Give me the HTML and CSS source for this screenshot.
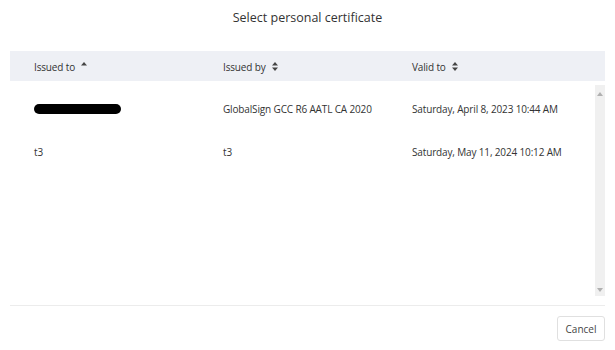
FILE: index.html
```html
<!DOCTYPE html>
<html>
<head>
<meta charset="utf-8">
<link rel="stylesheet" href="styles.css">
</head>
<body>
<div class="dialog">
  <h1 class="title">Select personal certificate</h1>
  <div class="table">
    <div class="thead">
      <div class="th">Issued to <span class="sort"><svg width="6" height="9" viewBox="0 0 6 9"><path d="M3 0L6 3.5H0Z" fill="#444"/></svg></span></div>
      <div class="th">Issued by <span class="sort"><svg width="6" height="9" viewBox="0 0 6 9"><path d="M3 0L6 3.5H0Z M3 9L6 5.5H0Z" fill="#444"/></svg></span></div>
      <div class="th">Valid to <span class="sort"><svg width="6" height="9" viewBox="0 0 6 9"><path d="M3 0L6 3.5H0Z M3 9L6 5.5H0Z" fill="#444"/></svg></span></div>
    </div>
    <div class="tbody">
      <div class="rows">
        <div class="row">
          <div class="td"><span class="redact"></span></div>
          <div class="td">GlobalSign GCC R6 AATL CA 2020</div>
          <div class="td">Saturday, April 8, 2023 10:44 AM</div>
        </div>
        <div class="row">
          <div class="td">t3</div>
          <div class="td">t3</div>
          <div class="td">Saturday, May 11, 2024 10:12 AM</div>
        </div>
      </div>
      <div class="scrollbar">
        <svg class="arrow" width="6" height="4" viewBox="0 0 6 4"><path d="M3 0L6 4H0Z" fill="#b0b0b0"/></svg>
        <svg class="arrow" width="6" height="4" viewBox="0 0 6 4"><path d="M0 0H6L3 4Z" fill="#b0b0b0"/></svg>
      </div>
    </div>
  </div>
  <div class="footer">
    <button class="btn">Cancel</button>
  </div>
</div>
</body>
</html>
```
FILE: styles.css
```css
* { box-sizing: border-box; }
html, body { margin: 0; padding: 0; background: #fff; }
body {
  font-family: "Open Sans", "Noto Sans", sans-serif;
  color: #333;
  width: 615px;
  height: 350px;
  overflow: hidden;
}
.dialog {
  padding: 0 10px;
  display: flex;
  flex-direction: column;
}
.title {
  margin: 0;
  height: 51px;
  padding-top: 8px;
  font-size: 12.5px;
  font-weight: 400;
  text-align: center;
  color: #333;
  line-height: 20px;
}
.table { display: flex; flex-direction: column; }
.thead {
  height: 30px;
  background: #eef0f5;
  display: grid;
  grid-template-columns: 189px 189px 1fr;
  padding-left: 24px;
  align-items: center;
}
.th {
  font-size: 10px;
  letter-spacing: -0.15px;
  color: #333;
  display: flex;
  align-items: center;
  gap: 6px;
  padding-top: 1px;
}
.sort { display: flex; align-items: center; }
.tbody {
  display: flex;
  height: 225px;
  border-bottom: 1px solid #ececec;
}
.rows { flex: 1; padding-top: 6px; }
.row {
  height: 43px;
  display: grid;
  grid-template-columns: 189px 189px 1fr;
  padding-left: 24px;
  align-items: center;
}
.td { font-size: 10px; letter-spacing: -0.15px; color: #333; }
.redact {
  display: block;
  width: 87px;
  height: 10px;
  background: #000;
  border-radius: 5px;
  margin-top: 1px;
}
.scrollbar {
  width: 10px;
  margin: 4px 0 9px;
  background: #f0f0f0;
  display: flex;
  flex-direction: column;
  justify-content: space-between;
  align-items: center;
  padding: 7px 0 4px;
}
.footer {
  display: flex;
  justify-content: flex-end;
  padding-top: 10px;
}
.btn {
  font-family: "Open Sans", "Noto Sans", sans-serif;
  font-size: 10px;
  color: #444;
  background: #fff;
  border: 1px solid #e0e0e0;
  border-radius: 3px;
  height: 25px;
  width: 48px;
  padding: 0;
}
```
